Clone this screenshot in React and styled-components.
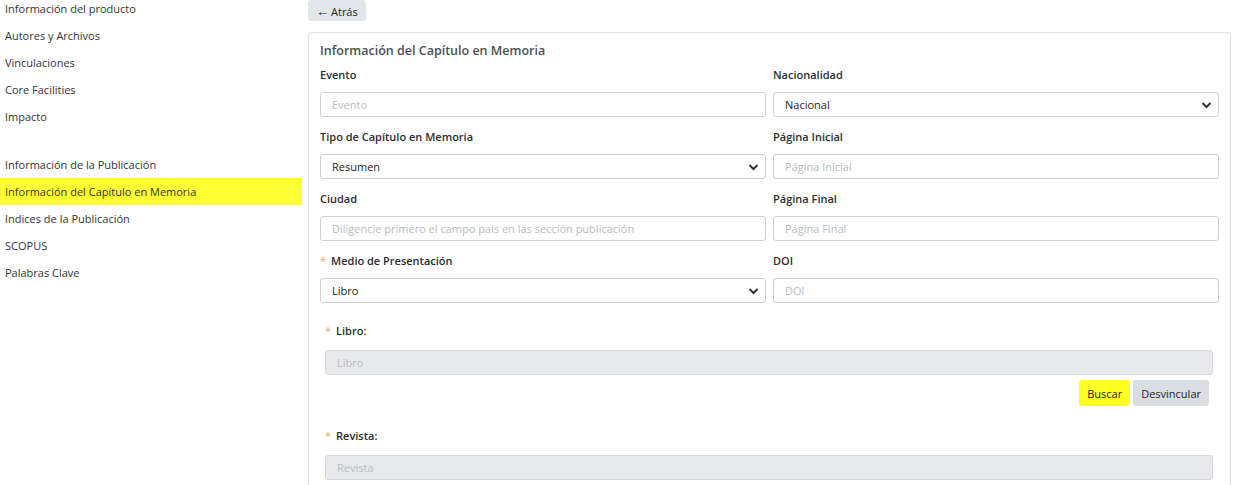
import React from 'react'
import styled, { createGlobalStyle } from 'styled-components'

const Global = createGlobalStyle`
  body { margin: 0; font-family: "Open Sans", "Noto Sans", sans-serif; font-size: 11px; color: #212529; background: #fff; }
`;

const Page = styled.div`
  display: flex;
  height: 485px;
  overflow: hidden;
`;
const Sidebar = styled.div`
  width: 302px;
  flex-shrink: 0;
  display: flex;
  flex-direction: column;
`;
const NavItem = styled.div`
  height: 27px;
  line-height: 17px;
  padding: 0 5px;
  display: flex;
  align-items: center;
  color: #333;
  background: ${({ active }) => (active ? '#ffff33' : 'transparent')};
  margin-bottom: ${({ gap }) => (gap ? '21px' : '0')};
  transform: translateY(-5px);
`;
const Main = styled.div`
  flex: 1;
  padding: 0 2px 0 6px;
`;
const BackButton = styled.button`
  height: 21px;
  padding: 0 8px;
  border: none;
  border-radius: 3px;
  background: #e2e5e9;
  font: inherit;
  color: #212529;
  margin-bottom: 11px;
`;
const Arrow = styled.span`
  font-size: 13px;
  margin-right: 2px;
`;
const Card = styled.div`
  border: 1px solid #dde0e4;
  border-radius: 4px;
  padding: 9px 11px 20px 11px;
`;
const Title = styled.div`
  font-size: 12.5px;
  font-weight: 600;
  color: #4a4f57;
  margin-bottom: 8px;
`;
const Grid = styled.div`
  display: grid;
  grid-template-columns: 1fr 1fr;
  column-gap: 7px;
  row-gap: 12px;
`;
const Field = styled.div`
  display: flex;
  flex-direction: column;
  gap: 9px;
`;
const Label = styled.div`
  font-weight: 600;
  color: #2a2e33;
  height: 16px;
  line-height: 16px;
`;
const Star = styled.span`
  color: #f0a860;
  margin-right: 5px;
  font-weight: 400;
`;
const Input = styled.div`
  height: 25px;
  box-sizing: border-box;
  border: 1px solid ${({ disabled }) => (disabled ? '#d5d9de' : '#ccd0d5')};
  border-radius: 3px;
  background: ${({ disabled }) => (disabled ? '#e7e9ec' : '#fff')};
  display: flex;
  align-items: center;
  justify-content: space-between;
  padding: 0 6px 0 11px;
  color: ${({ placeholder }) => (placeholder ? '#b8bcc2' : '#212529')};
`;
const Section = styled.div`
  padding: 0 6px 0 5px;
  margin-top: ${({ top }) => top};
  display: flex;
  flex-direction: column;
  gap: 11px;
`;
const Actions = styled.div`
  display: flex;
  justify-content: flex-end;
  gap: 3px;
  margin-top: 5px;
  padding-right: 10px;
`;
const Btn = styled.button`
  height: 26px;
  padding: 0 8px;
  border: none;
  border-radius: 3px;
  font: inherit;
  color: #212529;
  background: ${({ yellow }) => (yellow ? '#ffff22' : '#dadde1')};
`;

const Chevron = () => (
  <svg width="11" height="8" viewBox="0 0 11 8"><path d="M1.5 2 L5.5 6 L9.5 2" stroke="#333" strokeWidth="2" fill="none" /></svg>
);

const nav = [
  ['Información del producto'], ['Autores y Archivos'], ['Vinculaciones'], ['Core Facilities'],
  ['Impacto', false, true], ['Información de la Publicación'], ['Información del Capítulo en Memoria', true],
  ['Indices de la Publicación'], ['SCOPUS'], ['Palabras Clave'],
];

const fields = [
  { label: 'Evento', value: 'Evento', ph: true },
  { label: 'Nacionalidad', value: 'Nacional', select: true },
  { label: 'Tipo de Capítulo en Memoria', value: 'Resumen', select: true },
  { label: 'Página Inicial', value: 'Página Inicial', ph: true },
  { label: 'Ciudad', value: 'Diligencie primero el campo país en las sección publicación', ph: true },
  { label: 'Página Final', value: 'Página Final', ph: true },
  { label: 'Medio de Presentación', value: 'Libro', select: true, req: true },
  { label: 'DOI', value: 'DOI', ph: true },
];

export default function App() {
  return (
    <Page>
      <Global />
      <Sidebar>
        {nav.map(([t, a, g]) => (
          <NavItem key={t} active={a} gap={g}>{t}</NavItem>
        ))}
      </Sidebar>
      <Main>
        <BackButton><Arrow>←</Arrow>Atrás</BackButton>
        <Card>
          <Title>Información del Capítulo en Memoria</Title>
          <Grid>
            {fields.map((f) => (
              <Field key={f.label}>
                <Label>{f.req && <Star>*</Star>}{f.label}</Label>
                <Input placeholder={f.ph}>{f.value}{f.select && <Chevron />}</Input>
              </Field>
            ))}
          </Grid>
          <Section top="20px">
            <Label><Star>*</Star>Libro:</Label>
            <Input disabled placeholder>Libro</Input>
          </Section>
          <Actions>
            <Btn yellow>Buscar</Btn>
            <Btn>Desvincular</Btn>
          </Actions>
          <Section top="22px">
            <Label><Star>*</Star>Revista:</Label>
            <Input disabled placeholder>Revista</Input>
          </Section>
        </Card>
      </Main>
    </Page>
  )
}
